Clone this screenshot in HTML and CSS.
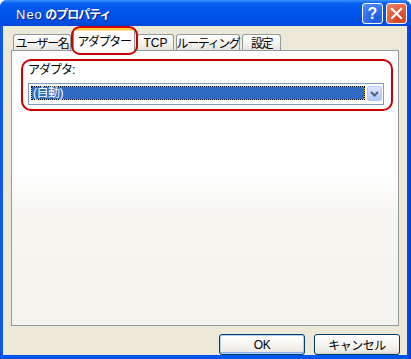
FILE: index.html
```html
<!DOCTYPE html>
<html lang="ja">
<head>
  <meta charset="UTF-8">
  <title>Neo のプロパティ</title>
  <link rel="stylesheet" href="styles.css">
</head>
<body>
  <div class="window">
    <div class="titlebar">
      <span class="title"><span class="title-latin">Neo</span> のプロパティ</span>
      <div class="caption-btns">
        <button class="cap-btn help" type="button">?</button>
        <button class="cap-btn close" type="button">
          <svg width="13" height="13" viewBox="0 0 13 13"><path d="M2 2 L11 11 M11 2 L2 11" stroke="#fff" stroke-width="2.2" stroke-linecap="square"/></svg>
        </button>
      </div>
    </div>
    <div class="client">
      <div class="tabs">
        <div class="tab tab-user">ユーザー名</div>
        <div class="tab tab-adapter active">アダプター</div>
        <div class="tab tab-tcp">TCP</div>
        <div class="tab tab-route">ルーティング</div>
        <div class="tab tab-conf">設定</div>
        <div class="mark-tab"></div>
      </div>
      <div class="panel">
        <div class="group">
          <label class="field-label">アダプタ:</label>
          <div class="combo">
            <div class="combo-sel">(自動)</div>
            <div class="combo-drop">
              <svg width="9" height="6" viewBox="0 0 9 6"><path d="M1 1 L4.5 4.5 L8 1" fill="none" stroke="#4d6185" stroke-width="2"/></svg>
            </div>
          </div>
        </div>
      </div>
      <div class="actions">
        <button class="btn default" type="button">OK</button>
        <button class="btn" type="button">キャンセル</button>
      </div>
    </div>
  </div>
</body>
</html>
```

FILE: styles.css
```css
body {
  margin: 0;
  padding: 0;
  background: #fff;
  font-family: "Liberation Sans", Arial, "Noto Sans CJK JP", sans-serif;
  font-size: 12px;
  color: #000;
}
.window {
  width: 411px;
  height: 359px;
  display: flex;
  flex-direction: column;
  background: linear-gradient(90deg, #0831d9 0, #166aee 1px, #0055ea 3px, #0055ea 407px, #0b46d4 409px, #0831d9 411px);
  border-radius: 7px 7px 0 0;
}
.titlebar {
  height: 29px;
  display: flex;
  align-items: center;
  padding: 0 4px 0 16px;
  background: linear-gradient(#3d95ff 0, #0a62f0 3px, #0058ee 8px, #0055eb 50%, #004fe3 80%, #0046d5 100%);
  border-radius: 7px 7px 0 0;
}
.title {
  flex: 1;
  color: #fff;
  font-weight: bold;
  font-size: 12px;
  letter-spacing: -1px;
  text-shadow: 1px 1px 0 #0a1e8c;
  padding-top: 1px;
}
.title-latin {
  font-weight: normal;
  letter-spacing: 1px;
  font-size: 13px;
}
.caption-btns {
  display: flex;
  gap: 3px;
  margin-top: 1px;
}
.cap-btn {
  width: 21px;
  height: 21px;
  border: 1px solid #fff;
  border-radius: 3px;
  padding: 0;
  display: flex;
  align-items: center;
  justify-content: center;
  color: #fff;
  font-family: "Liberation Sans", Arial, sans-serif;
  font-weight: bold;
  font-size: 16px;
}
.help {
  background: radial-gradient(circle at 70% 80%, #1c5ade 0, #2c6cf0 45%, #5d93f8 100%);
}
.close {
  background: radial-gradient(circle at 70% 80%, #cc4324 0, #e0583a 45%, #ef8a6c 100%);
}
.client {
  flex: 1;
  margin: 0 4px 4px 3px;
  background: #ece9d8;
  padding: 2px 8px 0 8px;
  display: flex;
  flex-direction: column;
}
.tabs {
  position: relative;
  height: 22px;
  display: flex;
  align-items: flex-end;
  gap: 2px;
  padding-left: 2px;
}
.tab {
  height: 15px;
  border: 1px solid #919b9c;
  border-bottom: none;
  border-radius: 3px 3px 0 0;
  background: linear-gradient(#fff, #f4f3ef 55%, #e5e4dc);
  display: flex;
  align-items: center;
  justify-content: center;
  font-size: 12px;
  letter-spacing: -1.4px;
  white-space: nowrap;
}
.tab.active {
  position: relative;
  z-index: 2;
  height: 20px;
  margin-bottom: -1px;
  padding-bottom: 1px;
  background: #fff;
  border-top: 3px solid #ffc83c;
  box-shadow: inset 0 1px 0 #fbe4a0;
  border-radius: 3px 3px 0 0;
}
.tab-user { width: 56px; }
.tab-adapter { width: 60px; }
.tab-tcp { width: 35px; letter-spacing: 0; }
.tab-route { width: 62px; }
.tab-conf { width: 37px; }
.mark-tab {
  position: absolute;
  left: 60px;
  top: -2px;
  width: 63px;
  height: 25px;
  border: 2px solid #cc0000;
  border-radius: 9px;
  z-index: 3;
}
.panel {
  height: 266px;
  border: 1px solid #919b9c;
  background: linear-gradient(#fff 0, #fff 45%, #f6f5f0 60%, #f4f3ee 100%);
  padding: 8px 5px 0 9px;
}
.group {
  border: 2px solid #cc0000;
  border-radius: 10px;
  padding: 2px 7px 4px 5px;
}
.field-label {
  display: block;
  height: 14px;
  line-height: 14px;
  font-size: 12px;
  letter-spacing: -1px;
  margin-bottom: 6px;
}
.combo {
  height: 18px;
  border: 1px solid #7f9db9;
  background: #fff;
  display: flex;
  align-items: flex-start;
  padding: 1px;
}
.combo-sel {
  flex: 1;
  height: 12px;
  margin: 1px 2px 0 1px;
  border: 1px dotted #000;
  background: linear-gradient(#316ac5, #316ac5) padding-box, #f3c21b border-box;
  color: #fff;
  font-size: 12px;
  line-height: 12px;
  padding-left: 1px;
  letter-spacing: -0.5px;
  display: flex;
  align-items: center;
}
.combo-drop {
  width: 15px;
  height: 15px;
  margin-top: 1px;
  border: 1px solid #b4c8f6;
  border-radius: 2px;
  box-sizing: border-box;
  background: linear-gradient(#dce7fe, #c2d4fc 60%, #b3c8f8);
  display: flex;
  align-items: center;
  justify-content: center;
}
.actions {
  display: flex;
  justify-content: flex-end;
  gap: 9px;
  margin-top: 8px;
  margin-right: -1px;
}
.btn {
  width: 86px;
  height: 21px;
  border: 1px solid #003c74;
  border-radius: 3px;
  background: linear-gradient(#fff 0, #f5f4f0 50%, #ecebe4 85%, #d6d0c5 100%);
  font-family: "Liberation Sans", Arial, "Noto Sans CJK JP", sans-serif;
  font-size: 12px;
  letter-spacing: -0.5px;
  padding: 0;
  color: #000;
}
.btn.default {
  box-shadow: inset 0 0 0 1px #b4cdf1, inset 0 -1px 0 1px #8cb0e8;
}
```
